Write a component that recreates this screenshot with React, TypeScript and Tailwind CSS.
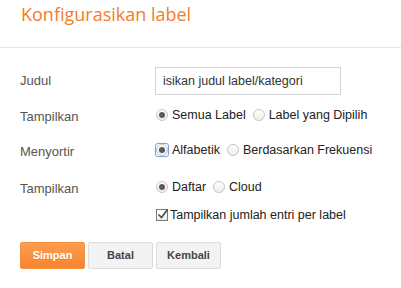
import React from 'react';

function Radio({ checked = false, focused = false }: { checked?: boolean; focused?: boolean }) {
  const dot = (
    <span className="flex h-[12px] w-[12px] items-center justify-center rounded-full border border-[#c4c4c4] bg-gradient-to-b from-white to-[#ececec]">
      {checked && <span className="h-[6px] w-[6px] rounded-full bg-[#5a5a5a]" />}
    </span>
  );
  if (focused) {
    return (
      <span className="flex h-[14px] w-[14px] shrink-0 items-center justify-center rounded-[3px] border border-[#7aa2e6] shadow-[0_0_1px_#9dbdf0]">
        {dot}
      </span>
    );
  }
  return <span className="flex h-[14px] w-[14px] shrink-0 items-center justify-center">{dot}</span>;
}

function Option({ label, checked, focused }: { label: string; checked?: boolean; focused?: boolean }) {
  return (
    <label className="flex items-center gap-[3px]">
      <Radio checked={checked} focused={focused} />
      <span>{label}</span>
    </label>
  );
}

function Row({ label, children, className = '' }: { label?: string; children: React.ReactNode; className?: string }) {
  return (
    <div className={`flex h-[20px] items-center ${className}`}>
      <div className="w-[135px] shrink-0 pt-[3px] text-[13px] text-[#555]">{label}</div>
      <div className="flex items-center gap-[6px] text-[12.5px] text-[#222]">{children}</div>
    </div>
  );
}

export default function App() {
  return (
    <div className="h-[288px] w-[401px] bg-white font-['Liberation_Sans',Arial,sans-serif]">
      <div className="h-[48px] border-b border-[#e6e6e6] px-[21px] pt-[2px]">
        <h1 className="font-['Open_Sans',sans-serif] text-[18px] leading-[24px] text-[#f67c2a]">Konfigurasikan label</h1>
      </div>

      <div className="px-[20px] pt-[19px]">
        <div className="flex h-[28px] items-center">
          <div className="w-[135px] shrink-0 text-[13px] text-[#555]">Judul</div>
          <div className="flex h-[28px] w-[186px] items-center border border-[#d4d4d4] px-[7px] text-[12.5px] text-[#333]">
            isikan judul label/kategori
          </div>
        </div>

        <Row label="Tampilkan" className="mt-[10px]">
          <Option label="Semua Label" checked />
          <Option label="Label yang Dipilih" />
        </Row>

        <Row label="Menyortir" className="mt-[15px]">
          <Option label="Alfabetik" checked focused />
          <Option label="Berdasarkan Frekuensi" />
        </Row>

        <Row label="Tampilkan" className="mt-[17px]">
          <Option label="Daftar" checked />
          <Option label="Cloud" />
        </Row>

        <Row className="mt-[8px]">
          <label className="flex items-center gap-[1px]">
            <span className="relative flex h-[14px] w-[14px] items-center justify-center">
              <span className="h-[12px] w-[12px] border border-[#7a7a7a] bg-gradient-to-b from-white to-[#eeeeee]" />
              <svg className="absolute left-[2px] top-[0px]" width="12" height="12" viewBox="0 0 12 12">
                <path d="M1.5 6.5 L4.5 9.5 L10.5 1.5" fill="none" stroke="#4a4a4a" strokeWidth="1.6" />
              </svg>
            </span>
            <span>Tampilkan jumlah entri per label</span>
          </label>
        </Row>

        <div className="mt-[17px] flex gap-[3px] text-[11px] font-bold">
          <button className="h-[27px] w-[65px] rounded-[2px] border border-[#f5903d] bg-gradient-to-b from-[#fd9d50] to-[#f7832c] text-white [text-shadow:0_1px_0_rgba(0,0,0,0.1)]">
            Simpan
          </button>
          <button className="h-[27px] w-[65px] rounded-[2px] border border-[#dcdcdc] bg-[#f3f3f3] text-[#444]">
            Batal
          </button>
          <button className="h-[27px] w-[65px] rounded-[2px] border border-[#dcdcdc] bg-[#f3f3f3] text-[#444]">
            Kembali
          </button>
        </div>
      </div>
    </div>
  );
}
